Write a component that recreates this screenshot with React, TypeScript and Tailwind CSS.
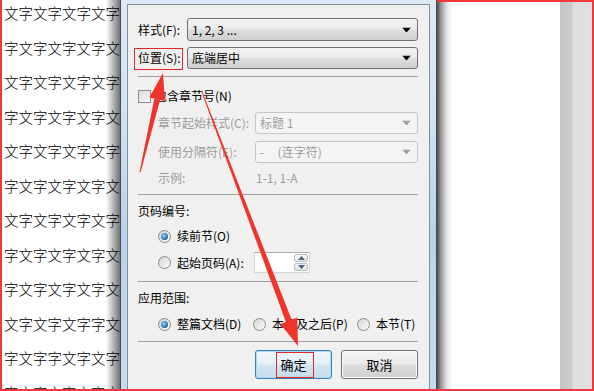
import React from 'react'

const docLines = [
  '文字文字文字文字',
  '字文字文字文字文',
  '文字文字文字文字',
  '字文字文字文字文',
  '文字文字文字文字',
  '字文字文字文字文',
  '文字文字文字文字',
  '字文字文字文字文',
  '字文字文字文字文',
  '文字文字文字字文',
  '字文字字文字文字',
  '字文字文字文字文',
]

function Arrow({ disabled }: { disabled?: boolean }) {
  return (
    <svg width="9" height="5" viewBox="0 0 9 5" className="absolute right-[6px] top-1/2 -translate-y-1/2">
      <path d="M0 0 H9 L4.5 5 Z" fill={disabled ? '#a0a0a0' : '#000'} />
    </svg>
  )
}

function Select({ value, disabled }: { value: string; disabled?: boolean }) {
  return (
    <div
      className={
        disabled
          ? 'relative flex-1 h-full flex items-center pl-[4px] rounded-[3px] border border-[#c6c6c6] bg-[#f4f4f4] text-[#9d9d9d]'
          : 'relative flex-1 h-full flex items-center pl-[4px] rounded-[3px] border border-[#707070] bg-[linear-gradient(#f3f3f3_0%,#ebebeb_48%,#dddddd_52%,#d0d0d0_100%)] text-black'
      }
    >
      <span className="whitespace-pre">{value}</span>
      <Arrow disabled={disabled} />
    </div>
  )
}

function Radio({ checked }: { checked?: boolean }) {
  return (
    <span className="w-[13px] h-[13px] rounded-full border border-[#8a8a8a] bg-[linear-gradient(135deg,#d6d6d6,#fbfbfb)] flex items-center justify-center shrink-0">
      {checked && (
        <span className="w-[7px] h-[7px] rounded-full bg-[radial-gradient(circle_at_40%_40%,#9fd3f7,#2a74b4_60%,#14466f)]" />
      )}
    </span>
  )
}

function Separator({ mt }: { mt: string }) {
  return <div className={`${mt} h-px bg-[#a0a0a0] shrink-0`} />
}

function Button({ label, focused }: { label: string; focused?: boolean }) {
  return (
    <div
      className={
        focused
          ? 'w-[77px] h-[29px] rounded-[3px] border border-[#3c7fb1] shadow-[inset_0_0_0_1px_#a8dcf8] bg-[linear-gradient(#f1f8fd_0%,#e6f0f8_48%,#d6e6f2_52%,#c4d9ea_100%)] flex items-center justify-center text-[13px]'
          : 'w-[77px] h-[29px] rounded-[3px] border border-[#707070] shadow-[inset_0_0_0_1px_#fbfbfb] bg-[linear-gradient(#f2f2f2_0%,#ebebeb_48%,#dddddd_52%,#cfcfcf_100%)] flex items-center justify-center text-[13px]'
      }
    >
      {label}
    </div>
  )
}

export default function App() {
  return (
    <div className="relative w-[594px] h-[391px] overflow-hidden bg-white flex font-['Noto_Sans_CJK_SC','Microsoft_YaHei',sans-serif] text-black">
      {/* document text on the left */}
      <div className="relative w-[120px] shrink-0">
        <div className="mt-[-4px] pl-[4px] text-[14.5px] leading-[34.5px] font-light whitespace-nowrap">
          {docLines.map((l, i) => (
            <div key={i}>{l}</div>
          ))}
        </div>
        <div className="absolute right-0 top-0 bottom-0 w-[14px] bg-[linear-gradient(90deg,rgba(0,0,0,0),rgba(0,0,0,0.55))]" />
      </div>

      {/* dialog */}
      <div className="w-[317px] shrink-0 flex flex-col border-l border-r border-[#4a4a4a] px-[6px] pt-[4px] bg-[linear-gradient(#dceaf8_0%,#cfe2f6_30%,#b7d2ef_60%,#c6dcf3_100%)]">
        <div className="flex-1 flex flex-col border border-b-0 border-[#8e8e8e] bg-[#f0f0f0] pl-[10px] pr-[11px] pt-[13px] text-[12px]">
          <div className="flex items-center h-[23px]">
            <span className="w-[49px]">样式(F):</span>
            <Select value="1, 2, 3 ..." />
          </div>
          <div className="flex items-center h-[22px] mt-[6px]">
            <span className="w-[49px]">位置(S):</span>
            <Select value="底端居中" />
          </div>
          <Separator mt="mt-[7px]" />

          <div className="flex items-center h-[14px] mt-[12px]">
            <span className="w-[13px] h-[13px] border border-[#8f8f8f] bg-[linear-gradient(135deg,#dcdcdc,#f8f8f8)] shrink-0" />
            <span className="ml-[4px]">包含章节号(N)</span>
          </div>
          <div className="flex items-center h-[22px] mt-[9px] pl-[20px] text-[#9d9d9d]">
            <span className="w-[97px]">章节起始样式(C):</span>
            <Select value="标题 1" disabled />
          </div>
          <div className="flex items-center h-[22px] mt-[7px] pl-[20px] text-[#9d9d9d]">
            <span className="w-[97px]">使用分隔符(E):</span>
            <Select value="-     (连字符)" disabled />
          </div>
          <div className="flex items-center h-[14px] mt-[8px] pl-[20px] text-[#9d9d9d]">
            <span className="w-[98px]">示例:</span>
            <span>1-1, 1-A</span>
          </div>
          <Separator mt="mt-[9px]" />

          <div className="flex items-center h-[14px] mt-[9px]">页码编号:</div>
          <div className="flex items-center h-[14px] mt-[11px] pl-[20px] gap-[6px]">
            <Radio checked />
            <span>续前节(O)</span>
          </div>
          <div className="flex items-center h-[21px] mt-[9px] pl-[20px]">
            <Radio />
            <span className="ml-[6px] w-[77px]">起始页码(A):</span>
            <div className="w-[56px] h-full bg-white border border-[#d5d6da] border-t-[#abadb3] flex justify-end items-stretch p-px">
              <div className="w-[14px] flex flex-col gap-px">
                <div className="flex-1 border border-[#b8bcc4] rounded-[2px] bg-[linear-gradient(#f6f6f6,#e2e4e8)] flex items-center justify-center">
                  <svg width="7" height="4" viewBox="0 0 7 4"><path d="M0 4 H7 L3.5 0 Z" fill="#4d6185" /></svg>
                </div>
                <div className="flex-1 border border-[#b8bcc4] rounded-[2px] bg-[linear-gradient(#f6f6f6,#e2e4e8)] flex items-center justify-center">
                  <svg width="7" height="4" viewBox="0 0 7 4"><path d="M0 0 H7 L3.5 4 Z" fill="#4d6185" /></svg>
                </div>
              </div>
            </div>
          </div>
          <Separator mt="mt-[8px]" />

          <div className="flex items-center h-[14px] mt-[9px]">应用范围:</div>
          <div className="flex items-center h-[14px] mt-[12px] pl-[20px]">
            <div className="w-[95px] flex items-center gap-[6px]">
              <Radio checked />
              <span>整篇文档(D)</span>
            </div>
            <div className="w-[104px] flex items-center gap-[6px]">
              <Radio />
              <span>本页及之后(P)</span>
            </div>
            <div className="flex items-center gap-[6px]">
              <Radio />
              <span>本节(T)</span>
            </div>
          </div>
          <Separator mt="mt-[10px]" />

          <div className="flex justify-end gap-[9px] mt-[8px]">
            <Button label="确定" focused />
            <Button label="取消" />
          </div>
        </div>
      </div>

      {/* page behind */}
      <div className="w-[123px] shrink-0 bg-[linear-gradient(90deg,#4a4a4a_0px,#9a9a9a_4px,#e6e6e6_10px,#ffffff_16px)]" />
      <div className="flex-1 bg-[linear-gradient(90deg,#c6c6c6_0px,#cdcdcd_12px,#dfdfdf_13px,#e0e0e0_100%)]" />

      {/* annotations */}
      <div className="absolute left-[134px] top-[48px] w-[49px] h-[22px] border border-[#e3262a]" />
      <div className="absolute left-[276px] top-[352px] w-[38px] h-[26px] border border-[#e3262a]" />
      <svg className="absolute inset-0 pointer-events-none" width="594" height="391" viewBox="0 0 594 391">
        <polygon points="139.5,172 154.3,98.7 160,100 140.6,172.2" fill="#f0342c" />
        <polygon points="163,73 149.3,97.5 164.9,101.1" fill="#f0342c" />
        <polygon points="201.6,92.2 285.9,321.9 291.6,319.6 202.4,91.8" fill="#f0342c" />
        <polygon points="298,346 297.2,317.5 280.4,323.9" fill="#f0342c" />
      </svg>
      <div className="absolute inset-0 border-l-2 border-r-2 border-b-2 border-[#f03a3a] pointer-events-none" />
      <div className="absolute left-[437px] right-0 top-0 h-[2px] bg-[#f03a3a]" />
    </div>
  )
}
